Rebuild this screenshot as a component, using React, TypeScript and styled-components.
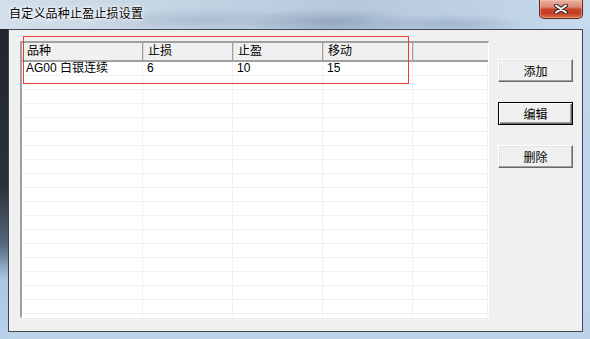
import * as React from "react";
import styled, { createGlobalStyle } from "styled-components";

const GlobalStyle = createGlobalStyle`
  html, body {
    margin: 0;
    padding: 0;
    overflow: hidden;
  }
  body {
    font-family: "Liberation Sans", "Noto Sans CJK SC", sans-serif;
  }
`;

const columns = [
  { key: "name", title: "品种" },
  { key: "stopLoss", title: "止损" },
  { key: "takeProfit", title: "止盈" },
  { key: "trailing", title: "移动" },
];

const rows = [{ name: "AG00 白银连续", stopLoss: "6", takeProfit: "10", trailing: "15" }];

const EMPTY_ROWS = 19;

const Window = styled.div`
  width: 590px;
  height: 339px;
  display: flex;
  flex-direction: column;
  background:
    linear-gradient(180deg, #1f2329 0%, #2c323a 55%, #55677c 72%, #a9c5e3 82%, #b9d2ec 100%) left top / 8px 100% no-repeat,
    linear-gradient(180deg, #c3d7ec 0%, #bcd3ea 100%);
`;

const TitleBar = styled.div`
  height: 29px;
  display: flex;
  justify-content: space-between;
  align-items: flex-start;
  background:
    radial-gradient(ellipse 90px 14px at 330px 22px, rgba(120, 140, 165, 0.55), transparent),
    radial-gradient(ellipse 110px 12px at 200px 20px, rgba(150, 168, 190, 0.5), transparent),
    radial-gradient(ellipse 80px 10px at 450px 24px, rgba(130, 150, 175, 0.45), transparent),
    linear-gradient(90deg, #d3dfea 0%, #c4d4e4 30%, #b5c8dc 60%, #bfd2e6 85%, #c7dbee 100%);
`;

const Title = styled.div`
  padding-left: 9px;
  line-height: 29px;
  font-size: 12px;
  letter-spacing: 0.2px;
  color: #000;
  text-shadow: 0 0 6px #fff, 0 0 3px #fff, 0 0 2px #fff;
`;

const CloseButton = styled.div`
  width: 44px;
  height: 19px;
  margin-right: 7px;
  box-sizing: border-box;
  border: 1px solid #5c2a22;
  border-top: none;
  border-radius: 0 0 5px 5px;
  display: flex;
  align-items: center;
  justify-content: center;
  background: linear-gradient(180deg, #eab2a3 0%, #dc8672 40%, #c8432a 52%, #c53f25 75%, #dc7048 100%);
  box-shadow: inset 0 0 0 1px rgba(255, 200, 180, 0.45);
`;

const Client = styled.div`
  position: relative;
  height: 303px;
  margin: 0 7px 0 8px;
  box-sizing: border-box;
  border: 1px solid #3f4651;
  background: #f0f0f0;
  display: flex;
  align-items: flex-start;
  padding: 11px 9px 12px 11px;
`;

const ListView = styled.div`
  width: 469px;
  height: 277px;
  box-sizing: border-box;
  border-top: 2px solid #a0a0a0;
  border-left: 2px solid #a0a0a0;
  border-right: 1px solid #ffffff;
  border-bottom: 1px solid #ffffff;
  background: #ffffff;
  overflow: hidden;
`;

const GridRow = styled.div`
  display: grid;
  grid-template-columns: 121px 90px 90px 90px 1fr;
`;

const HeaderRow = styled(GridRow)`
  height: 19px;
  box-sizing: border-box;
  background: #f0f0f0;
  border-bottom: 2px solid #a0a0a0;
`;

const HeaderCell = styled.div<{ $last?: boolean }>`
  box-sizing: border-box;
  padding-left: 5px;
  font-size: 12px;
  line-height: 17px;
  color: #000;
  border-right: ${(p) => (p.$last ? "none" : "1px solid #a0a0a0")};
  box-shadow: ${(p) => (p.$last ? "none" : "1px 0 0 #d8d8d8")};
  white-space: nowrap;
`;

const Cell = styled.div`
  box-sizing: border-box;
  height: 14px;
  padding-left: 4px;
  font-size: 12px;
  line-height: 13px;
  color: #000;
  border-right: 1px solid #f0f0f0;
  border-bottom: 1px solid #f0f0f0;
  white-space: nowrap;
  overflow: hidden;
`;

const Buttons = styled.div`
  margin-left: 9px;
  padding-top: 18px;
  display: flex;
  flex-direction: column;
  gap: 20px;
`;

const Button = styled.div<{ $default?: boolean }>`
  width: 75px;
  height: 23px;
  box-sizing: border-box;
  display: flex;
  align-items: center;
  justify-content: center;
  font-size: 12px;
  color: #000;
  background: #f0f0f0;
  border: 1px solid;
  border-color: ${(p) => (p.$default ? "#000" : "#fff #696969 #696969 #fff")};
  box-shadow: ${(p) =>
    p.$default
      ? "inset 1px 1px #fff, inset -1px -1px #696969, inset -2px -2px #a0a0a0"
      : "inset -1px -1px #a0a0a0, inset 1px 1px #e3e3e3"};
`;

const Highlight = styled.div`
  position: absolute;
  left: 14px;
  top: 6px;
  width: 386px;
  height: 48px;
  box-sizing: border-box;
  border: 1px solid #ec3b3b;
  pointer-events: none;
`;

const CloseIcon = () => (
  <svg width="14" height="10" viewBox="0 0 14 10">
    <path d="M2 1.5 L12 8.5 M12 1.5 L2 8.5" stroke="#3a2a2a" strokeWidth="4" strokeLinecap="round" />
    <path d="M2 1.5 L12 8.5 M12 1.5 L2 8.5" stroke="#ffffff" strokeWidth="2" strokeLinecap="round" />
  </svg>
);

export default function App() {
  return (
    <>
      <GlobalStyle />
      <Window>
        <TitleBar>
          <Title>自定义品种止盈止损设置</Title>
          <CloseButton>
            <CloseIcon />
          </CloseButton>
        </TitleBar>
        <Client>
          <ListView>
            <HeaderRow>
              {columns.map((c) => (
                <HeaderCell key={c.key}>{c.title}</HeaderCell>
              ))}
              <HeaderCell $last />
            </HeaderRow>
            {rows.map((r, i) => (
              <GridRow key={i}>
                <Cell>{r.name}</Cell>
                <Cell>{r.stopLoss}</Cell>
                <Cell>{r.takeProfit}</Cell>
                <Cell>{r.trailing}</Cell>
                <Cell />
              </GridRow>
            ))}
            {Array.from({ length: EMPTY_ROWS }).map((_, i) => (
              <GridRow key={"e" + i}>
                <Cell />
                <Cell />
                <Cell />
                <Cell />
                <Cell />
              </GridRow>
            ))}
          </ListView>
          <Buttons>
            <Button>添加</Button>
            <Button $default>编辑</Button>
            <Button>删除</Button>
          </Buttons>
          <Highlight />
        </Client>
      </Window>
    </>
  );
}
